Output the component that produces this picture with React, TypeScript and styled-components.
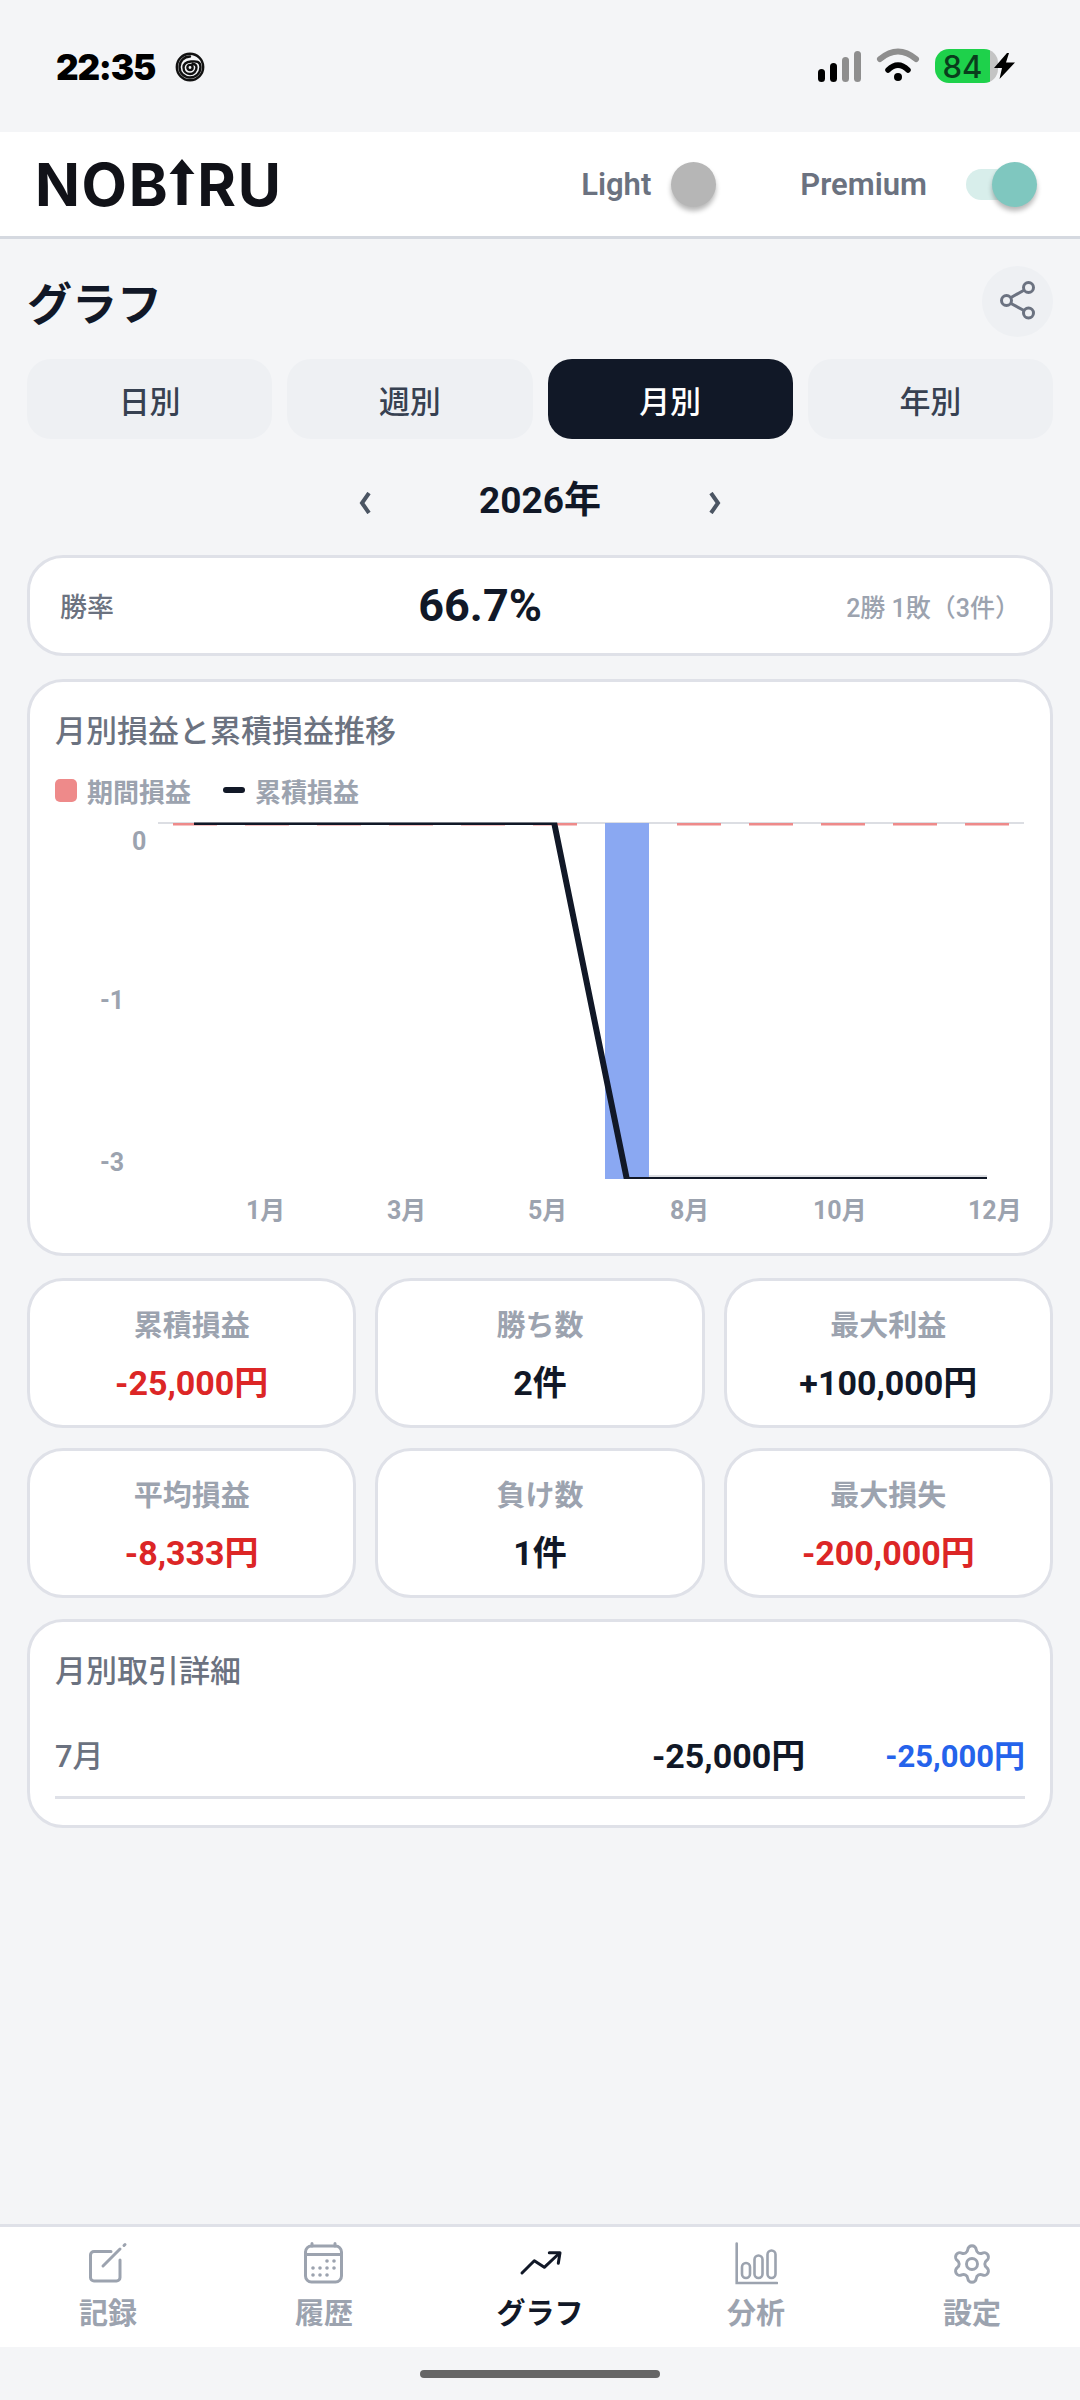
import React from 'react';
import styled, { createGlobalStyle } from 'styled-components';
import { Settings } from 'lucide-react';

const GlobalStyle = createGlobalStyle`
  html, body {
    margin: 0;
    padding: 0;
    background: #f4f5f7;
  }
  body {
    font-family: Roboto, "Noto Sans CJK JP", sans-serif;
    color: #111827;
  }
`;

const tabs = ['日別', '週別', '月別', '年別'];

const stats = [
  { label: '累積損益', value: '-25,000円', tone: 'loss' },
  { label: '勝ち数', value: '2件', tone: 'plain' },
  { label: '最大利益', value: '+100,000円', tone: 'plain' },
  { label: '平均損益', value: '-8,333円', tone: 'loss' },
  { label: '負け数', value: '1件', tone: 'plain' },
  { label: '最大損失', value: '-200,000円', tone: 'loss' },
];

const xLabels = [
  { text: '1月', x: 216 },
  { text: '3月', x: 357 },
  { text: '5月', x: 498 },
  { text: '8月', x: 640 },
  { text: '10月', x: 783 },
  { text: '12月', x: 938 },
];

const yLabels = [
  { text: '0', x: 102, y: 26 },
  { text: '-1', x: 70, y: 185 },
  { text: '-3', x: 70, y: 347 },
];

const barX = (i: number) => 143 + 72 * i;

const PenIcon = () => (
  <svg width="44" height="44" viewBox="0 0 44 44" fill="none" stroke="#9ca3af" strokeWidth="3" strokeLinecap="round">
    <path d="M25 9.5H8a3.5 3.5 0 0 0-3.5 3.5v22.5A3.5 3.5 0 0 0 8 39h22.5a3.5 3.5 0 0 0 3.5-3.5V18" />
    <path d="M17 24 34 7" />
    <path d="M38 3.5 39 2.5" />
  </svg>
);

const CalendarIcon = () => (
  <svg width="44" height="44" viewBox="0 0 44 44" fill="none" stroke="#9ca3af" strokeWidth="3" strokeLinecap="round">
    <rect x="3.5" y="4" width="36" height="36" rx="6" />
    <path d="M3.5 12.5h36M10 1.5V4M33 1.5V4" />
    <g fill="#9ca3af" stroke="none">
      {[[25, 19], [32, 19], [11, 26], [18, 26], [25, 26], [32, 26], [11, 33], [18, 33], [25, 33]].map(([cx, cy]) => (
        <circle key={`${cx}-${cy}`} cx={cx} cy={cy} r="1.8" />
      ))}
    </g>
  </svg>
);

const TrendIcon = () => (
  <svg width="44" height="44" viewBox="0 0 44 44" fill="none" stroke="#111827" strokeWidth="3" strokeLinecap="round" strokeLinejoin="round">
    <path d="M4 31 16.3 18.7 26.3 25.3 41 11.5" />
    <path d="M31.3 10.7H42L40.3 21.3" />
  </svg>
);

const BarsIcon = () => (
  <svg width="44" height="44" viewBox="0 0 44 44" fill="none" stroke="#9ca3af" strokeWidth="2.6" strokeLinecap="round">
    <path d="M2.7 1.5V41H43" />
    <rect x="8" y="21" width="8" height="15" rx="4" />
    <rect x="20.5" y="13.5" width="8" height="22.5" rx="4" />
    <rect x="33.5" y="8.5" width="8" height="27.5" rx="4" />
  </svg>
);

const navItems = [
  { label: '記録', icon: <PenIcon /> },
  { label: '履歴', icon: <CalendarIcon /> },
  { label: 'グラフ', icon: <TrendIcon />, active: true },
  { label: '分析', icon: <BarsIcon /> },
  { label: '設定', icon: <Settings size={44} color="#9ca3af" strokeWidth={1.6} /> },
];

const App = () => {
  return (
    <Page>
      <GlobalStyle />
      <StatusBar>
        <StatusLeft>
          <Clock>22:35</Clock>
          <svg width="30" height="30" viewBox="0 0 30 30" fill="none" stroke="#111" strokeWidth="2.4" strokeLinecap="round">
            <circle cx="15" cy="15" r="13.2" />
            <path d="M15 4.5c-6 0-10.5 4.6-10.5 10.5S9 25.500 15 25.500 25.500 21 25.500 15 21 9 16 9.500 8.500 11.500 8.500 15.500s3 6.500 6.500 6.500 6.500-3 6.500-6.500-2.500-3.500-4-3.500" />
            <circle cx="15" cy="15.500" r="2.600" />
          </svg>
        </StatusLeft>
        <StatusRight>
          <svg width="43" height="31" viewBox="0 0 43 31">
            <rect x="0" y="18" width="7" height="13" rx="3.5" fill="#000" />
            <rect x="12" y="12" width="7" height="19" rx="3.5" fill="#000" />
            <rect x="24" y="6" width="7" height="25" rx="3.5" fill="#8e8e8e" />
            <rect x="36" y="0" width="7" height="31" rx="3.5" fill="#8e8e8e" />
          </svg>
          <svg width="46" height="36" viewBox="0 0 46 36" fill="none" strokeLinecap="round">
            <path d="M5 11Q23-4 41 11" stroke="#8e8e8e" strokeWidth="6" />
            <path d="M13 22Q23 12 33 22" stroke="#000" strokeWidth="5.500" />
            <circle cx="23" cy="29" r="4" fill="#000" />
          </svg>
          <BatteryGroup>
            <Battery>84</Battery>
            <BoltWrap width="22" height="26" viewBox="0 0 22 26">
              <path d="M13 0 0 15h8l-2.500 11L21 9.500h-9L15 0Z" fill="#000" />
            </BoltWrap>
          </BatteryGroup>
        </StatusRight>
      </StatusBar>

      <Header>
        <Logo>
          <LogoWord>NOB</LogoWord>
          <LogoArrow width="26" height="46" viewBox="0 0 26 46">
            <path d="M13 0 25.500 15H17.500V46H8.500V15H.5Z" fill="#111218" />
          </LogoArrow>
          <LogoWord>RU</LogoWord>
        </Logo>
        <HeaderControls>
          <ToggleGroup $gap={20}>
            <ToggleLabel>Light</ToggleLabel>
            <Toggle $on={false}>
              <Thumb $on={false} />
            </Toggle>
          </ToggleGroup>
          <ToggleGroup $gap={39}>
            <ToggleLabel>Premium</ToggleLabel>
            <Toggle $on={true}>
              <Thumb $on={true} />
            </Toggle>
          </ToggleGroup>
        </HeaderControls>
      </Header>

      <Main>
        <TitleRow>
          <PageTitle>グラフ</PageTitle>
          <ShareButton>
            <svg width="71" height="71" viewBox="0 0 71 71" fill="none" stroke="#6b7280" strokeWidth="3">
              <circle cx="46.500" cy="21.500" r="5" />
              <circle cx="24.500" cy="34.500" r="5" />
              <circle cx="46.500" cy="47" r="5" />
              <path d="M41.500 24.500 29 31.500M29 37.500 42 44.500" />
            </svg>
          </ShareButton>
        </TitleRow>

        <Tabs>
          {tabs.map((tab) => (
            <Tab key={tab} $active={tab === '月別'}>{tab}</Tab>
          ))}
        </Tabs>

        <YearRow>
          <Chevron width="14" height="22" viewBox="0 0 14 22" fill="none" stroke="#4b5563" strokeWidth="4">
            <path d="M11 1 4 11l7 10" />
          </Chevron>
          <YearText>2026年</YearText>
          <Chevron width="14" height="22" viewBox="0 0 14 22" fill="none" stroke="#4b5563" strokeWidth="4">
            <path d="M3 1l7 10-7 10" />
          </Chevron>
        </YearRow>

        <WinRateCard>
          <WinLabel>勝率</WinLabel>
          <WinValue>66.7%</WinValue>
          <WinCount>2勝 1敗（3件）</WinCount>
        </WinRateCard>

        <ChartCard>
          <CardTitle>月別損益と累積損益推移</CardTitle>
          <Legend>
            <LegendSwatch />
            <LegendText>期間損益</LegendText>
            <LegendLine />
            <LegendText>累積損益</LegendText>
          </Legend>
          <ChartSvg width="1020" height="437" viewBox="0 0 1020 437">
            <defs>
              <clipPath id="plotArea">
                <rect x="0" y="7.500" width="1020" height="356.500" />
              </clipPath>
            </defs>
            <path d="M128 8H994M619 361H957" stroke="#dcdee3" strokeWidth="2" fill="none" />
            {Array.from({ length: 12 }).map((_, i) =>
              i === 6 ? (
                <rect key={i} x={barX(i)} y="8" width="44" height="356" fill="#8aa8f2" />
              ) : (
                <rect key={i} x={barX(i)} y="8" width="44" height="2.500" fill="#ee8a8a" />
              ),
            )}
            <path
              d="M164 7H524L597 365H957"
              fill="none"
              stroke="#111827"
              strokeWidth="6"
              strokeLinejoin="round"
              clipPath="url(#plotArea)"
            />
            {yLabels.map((l) => (
              <AxisText key={l.text} x={l.x} y={l.y + 9}>{l.text}</AxisText>
            ))}
            {xLabels.map((l) => (
              <AxisText key={l.text} x={l.x} y={404}>{l.text}</AxisText>
            ))}
          </ChartSvg>
        </ChartCard>

        <StatGrid>
          {stats.map((s) => (
            <StatCard key={s.label}>
              <StatLabel>{s.label}</StatLabel>
              <StatValue $tone={s.tone}>{s.value}</StatValue>
            </StatCard>
          ))}
        </StatGrid>

        <DetailCard>
          <CardTitle>月別取引詳細</CardTitle>
          <DetailRow>
            <DetailMonth>7月</DetailMonth>
            <DetailAmounts>
              <DetailValue>-25,000円</DetailValue>
              <DetailTotal>-25,000円</DetailTotal>
            </DetailAmounts>
          </DetailRow>
        </DetailCard>
      </Main>

      <BottomNav>
        {navItems.map((item) => (
          <NavItem key={item.label}>
            {item.icon}
            <NavLabel $active={!!item.active}>{item.label}</NavLabel>
          </NavItem>
        ))}
      </BottomNav>
      <HomeArea>
        <HomeBar />
      </HomeArea>
    </Page>
  );
};

export default App;

const Page = styled.div`
  width: 1080px;
  height: 2400px;
  display: flex;
  flex-direction: column;
  background: #f4f5f7;
  overflow: hidden;
`;

const StatusBar = styled.div`
  height: 132px;
  box-sizing: border-box;
  display: flex;
  align-items: center;
  justify-content: space-between;
  padding: 0 64px 0 56px;
`;

const StatusLeft = styled.div`
  display: flex;
  align-items: center;
  gap: 20px;
  margin-top: 1px;
`;

const Clock = styled.span`
  font-family: Inter, sans-serif;
  font-size: 35px;
  font-weight: 900;
  letter-spacing: -1.2px;
  color: #000;
`;

const StatusRight = styled.div`
  display: flex;
  align-items: center;
  gap: 14px;
`;

const BatteryGroup = styled.div`
  display: flex;
  align-items: center;
`;

const Battery = styled.div`
  width: 63px;
  height: 34px;
  box-sizing: border-box;
  padding-right: 8px;
  border-radius: 14px;
  background: linear-gradient(90deg, #1ed14b 0 55px, #c4c4c4 55px);
  display: flex;
  align-items: center;
  justify-content: center;
  font-family: Inter, sans-serif;
  font-size: 31px;
  font-weight: 500;
  color: #0a3d1c;
`;

const BoltWrap = styled.svg`
  margin-left: -4px;
`;

const Header = styled.header`
  height: 107px;
  box-sizing: border-box;
  display: flex;
  align-items: center;
  justify-content: space-between;
  padding: 0 43px 0 35px;
  background: #fff;
  border-bottom: 3px solid #d5d9e0;
`;

const Logo = styled.div`
  display: flex;
  align-items: center;
`;

const LogoWord = styled.span`
  font-family: Inter, sans-serif;
  font-size: 59px;
  font-weight: 700;
  line-height: 1;
  letter-spacing: 1.6px;
  color: #111218;
`;

const LogoArrow = styled.svg`
  margin: -4px 2px 0 0;
`;

const HeaderControls = styled.div`
  display: flex;
  align-items: center;
  gap: 84px;
`;

const ToggleGroup = styled.div<{ $gap: number }>`
  display: flex;
  align-items: center;
  gap: ${(props) => props.$gap}px;
`;

const ToggleLabel = styled.span`
  font-size: 31px;
  font-weight: 600;
  color: #6b7280;
`;

const Toggle = styled.div<{ $on: boolean }>`
  position: relative;
  width: ${(props) => (props.$on ? '66px' : '45px')};
  height: 31px;
  margin-right: ${(props) => (props.$on ? '5px' : '0')};
  border-radius: 16px;
  background: ${(props) => (props.$on ? '#d8eeeb' : 'transparent')};
`;

const Thumb = styled.div<{ $on: boolean }>`
  position: absolute;
  top: -7px;
  right: ${(props) => (props.$on ? '-5px' : '0')};
  width: 45px;
  height: 45px;
  border-radius: 50%;
  background: ${(props) => (props.$on ? '#7fc7bf' : '#b6b6b6')};
  box-shadow: 0 4px 5px rgba(0, 0, 0, 0.28);
`;

const Main = styled.main`
  flex: 1;
  padding: 0 27px;
`;

const TitleRow = styled.div`
  display: flex;
  align-items: center;
  justify-content: space-between;
  padding-top: 27px;
  margin-bottom: 22px;
`;

const PageTitle = styled.h1`
  margin: 0;
  font-size: 45px;
  font-weight: 700;
  color: #111827;
`;

const ShareButton = styled.div`
  width: 71px;
  height: 71px;
  border-radius: 50%;
  background: #eef0f3;
`;

const Tabs = styled.div`
  display: grid;
  grid-template-columns: repeat(4, 1fr);
  gap: 15px;
`;

const Tab = styled.div<{ $active: boolean }>`
  height: 80px;
  display: flex;
  align-items: center;
  justify-content: center;
  border-radius: 24px;
  font-size: 31px;
  font-weight: 500;
  background: ${(props) => (props.$active ? '#111827' : '#eef0f3')};
  color: ${(props) => (props.$active ? '#fff' : '#374151')};
`;

const YearRow = styled.div`
  height: 62px;
  margin: 27px 0 27px;
  display: flex;
  align-items: center;
  justify-content: center;
  gap: 107px;
`;

const Chevron = styled.svg`
  margin-top: 12px;
`;

const YearText = styled.span`
  font-size: 37px;
  font-weight: 700;
  color: #111827;
`;

const WinRateCard = styled.div`
  height: 101px;
  box-sizing: border-box;
  display: flex;
  align-items: center;
  justify-content: space-between;
  padding: 0 30px;
  background: #fff;
  border: 3px solid #dfe1e8;
  border-radius: 36px;
`;

const WinLabel = styled.span`
  font-size: 27px;
  font-weight: 500;
  color: #6b7280;
`;

const WinValue = styled.span`
  font-size: 45px;
  font-weight: 700;
  color: #111827;
`;

const WinCount = styled.span`
  font-size: 25px;
  font-weight: 500;
  color: #9ca3af;
`;

const ChartCard = styled.section`
  margin-top: 23px;
  box-sizing: border-box;
  height: 577px;
  padding-top: 29px;
  background: #fff;
  border: 3px solid #dfe1e8;
  border-radius: 36px;
`;

const CardTitle = styled.h2`
  margin: 0;
  padding: 0 25px;
  font-size: 31px;
  line-height: 42px;
  font-weight: 500;
  color: #6b7280;
`;

const Legend = styled.div`
  display: flex;
  align-items: center;
  height: 30px;
  margin: 22px 0 10px;
  padding: 0 25px;
`;

const LegendSwatch = styled.span`
  width: 22px;
  height: 23px;
  border-radius: 5px;
  background: #ee8a8a;
  margin-right: 10px;
`;

const LegendLine = styled.span`
  width: 22px;
  height: 6px;
  border-radius: 3px;
  background: #111827;
  margin: 0 10px 0 32px;
`;

const LegendText = styled.span`
  font-size: 26px;
  font-weight: 700;
  color: #9ca3af;
`;

const ChartSvg = styled.svg`
  display: block;
`;

const AxisText = styled.text`
  font-family: Roboto, "Noto Sans CJK JP", sans-serif;
  font-size: 25px;
  font-weight: 700;
  fill: #9ca3af;
`;

const StatGrid = styled.div`
  margin-top: 22px;
  display: grid;
  grid-template-columns: repeat(3, 1fr);
  gap: 20px 19px;
`;

const StatCard = styled.div`
  height: 150px;
  box-sizing: border-box;
  display: flex;
  flex-direction: column;
  align-items: center;
  padding-top: 24px;
  background: #fff;
  border: 3px solid #dfe1e8;
  border-radius: 36px;
`;

const StatLabel = styled.span`
  font-size: 29px;
  line-height: 42px;
  font-weight: 700;
  color: #9ca3af;
`;

const StatValue = styled.span<{ $tone: string }>`
  margin-top: 14px;
  font-size: 34px;
  line-height: 44px;
  font-weight: 700;
  color: ${(props) => (props.$tone === 'loss' ? '#dc2626' : '#111827')};
`;

const DetailCard = styled.section`
  margin-top: 21px;
  height: 209px;
  box-sizing: border-box;
  padding-top: 29px;
  background: #fff;
  border: 3px solid #dfe1e8;
  border-radius: 36px;
`;

const DetailRow = styled.div`
  margin: 20px 25px 0;
  height: 86px;
  box-sizing: border-box;
  padding-bottom: 2px;
  display: flex;
  align-items: center;
  justify-content: space-between;
  border-bottom: 3px solid #dfe1e8;
`;

const DetailMonth = styled.span`
  font-size: 31px;
  font-weight: 500;
  color: #6b7280;
`;

const DetailAmounts = styled.div`
  display: flex;
  align-items: center;
  gap: 80px;
`;

const DetailValue = styled.span`
  font-size: 34px;
  font-weight: 700;
  color: #111827;
`;

const DetailTotal = styled.span`
  font-size: 31px;
  font-weight: 700;
  color: #2563eb;
`;

const BottomNav = styled.nav`
  box-sizing: border-box;
  height: 123px;
  padding-top: 15px;
  display: grid;
  grid-template-columns: repeat(5, 216px);
  background: #fff;
  border-top: 3px solid #dfe1e8;
`;

const NavItem = styled.div`
  display: flex;
  flex-direction: column;
  align-items: center;
`;

const NavLabel = styled.span<{ $active: boolean }>`
  margin-top: 8px;
  font-size: 29px;
  line-height: 40px;
  font-weight: 700;
  color: ${(props) => (props.$active ? '#111827' : '#9ca3af')};
`;

const HomeArea = styled.div`
  height: 53px;
  display: flex;
  justify-content: center;
  padding-top: 23px;
  box-sizing: border-box;
`;

const HomeBar = styled.div`
  width: 240px;
  height: 8px;
  border-radius: 4px;
  background: #666;
`;
